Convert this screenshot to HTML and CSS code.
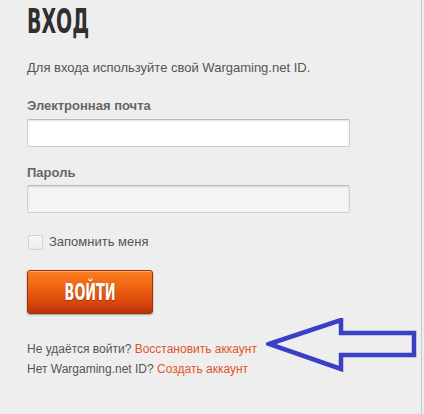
FILE: index.html
```html
<!DOCTYPE html>
<html lang="ru">
<head>
<meta charset="utf-8">
<link rel="stylesheet" href="styles.css">
</head>
<body>
<div class="page">
  <h1 class="title"><span class="title-text">ВХОД</span></h1>
  <p class="intro">Для входа используйте свой Wargaming.net ID.</p>
  <form class="form">
    <label class="label">Электронная почта</label>
    <input class="field field-email" type="text">
    <label class="label label-pass">Пароль</label>
    <input class="field field-pass" type="password">
    <div class="remember">
      <span class="check"></span>
      <span class="remember-text">Запомнить меня</span>
    </div>
    <button class="btn" type="button"><span class="btn-text">ВОЙТИ</span></button>
  </form>
  <div class="links">
    <div class="line">Не удаётся войти? <a class="link">Восстановить аккаунт</a></div>
    <div class="line">Нет Wargaming.net ID? <a class="link">Создать аккаунт</a></div>
  </div>
  <svg class="arrow" width="160" height="60" viewBox="0 0 160 60">
    <path d="M3 26 L75 2 L75 15 L148 15 L148 37 L75 37 L75 51 Z" fill="none" stroke="#3a3fc6" stroke-width="4.5" stroke-linejoin="miter"/>
  </svg>
</div>
</body>
</html>
```

FILE: styles.css
```css
html, body {
  margin: 0;
  padding: 0;
  background: #ededed;
}
.page {
  position: relative;
  width: 422px;
  height: 414px;
  box-sizing: border-box;
  padding-left: 27px;
  border-right: 1px solid #c9c9c9;
  background: #eeeeee;
  font-family: "Liberation Sans", Arial, sans-serif;
  color: #555;
  overflow: hidden;
}
.title {
  margin: 0;
  padding-top: 4px;
  height: 34px;
  font: bold 34px/34px "DejaVu Sans Condensed", "DejaVu Sans", sans-serif;
  color: #2f2f2f;
}
.title-text {
  display: inline-block;
  transform: scaleX(0.62);
  transform-origin: left center;
  letter-spacing: 0;
}
.intro {
  margin: 22px 0 0;
  font-size: 13px;
  line-height: 16px;
  color: #555;
}
.form {
  display: flex;
  flex-direction: column;
  align-items: flex-start;
  margin-top: 22px;
}
.label {
  font-size: 13px;
  line-height: 16px;
  font-weight: bold;
  color: #666;
}
.label-pass {
  margin-top: 18px;
}
.field {
  margin-top: 5px;
  width: 323px;
  height: 28px;
  box-sizing: border-box;
  border: 1px solid #cfcfcf;
  border-top-color: #b9b9b9;
  border-radius: 2px;
  box-shadow: inset 0 1px 2px rgba(0,0,0,0.12);
  background: #fff;
  padding: 0 6px;
  font: 13px "Liberation Sans", Arial, sans-serif;
}
.field-pass {
  margin-top: 4px;
  background: #f4f4f4;
}
.remember {
  display: flex;
  align-items: center;
  gap: 6px;
  margin-top: 21px;
  height: 16px;
}
.check {
  width: 15px;
  height: 15px;
  box-sizing: border-box;
  border: 1px solid #d2d2d2;
  border-radius: 2px;
  background: linear-gradient(#f7f7f7, #ececec);
  margin-left: 1px;
}
.remember-text {
  font-size: 13px;
  line-height: 16px;
  color: #555;
}
.btn {
  margin-top: 20px;
  width: 126px;
  height: 44px;
  padding: 0;
  border: 1px solid #9c2f0b;
  border-radius: 3px;
  background: linear-gradient(#f8801f 0%, #ee6312 40%, #d9470c 75%, #b8330a 100%);
  box-shadow: inset 0 1px 0 rgba(255,200,120,0.6), 0 1px 2px rgba(0,0,0,0.35);
  cursor: pointer;
}
.btn-text {
  display: inline-block;
  font: bold 23px/23px "DejaVu Sans Condensed", "DejaVu Sans", sans-serif;
  color: #fff;
  transform: scaleX(0.62);
  text-shadow: 0 1px 1px rgba(120,30,0,0.6);
}
.links {
  margin-top: 25px;
  font-size: 12px;
  line-height: 20px;
  color: #555;
}
.link {
  color: #e0552a;
}
.arrow {
  position: absolute;
  left: 266px;
  top: 318px;
}
```
